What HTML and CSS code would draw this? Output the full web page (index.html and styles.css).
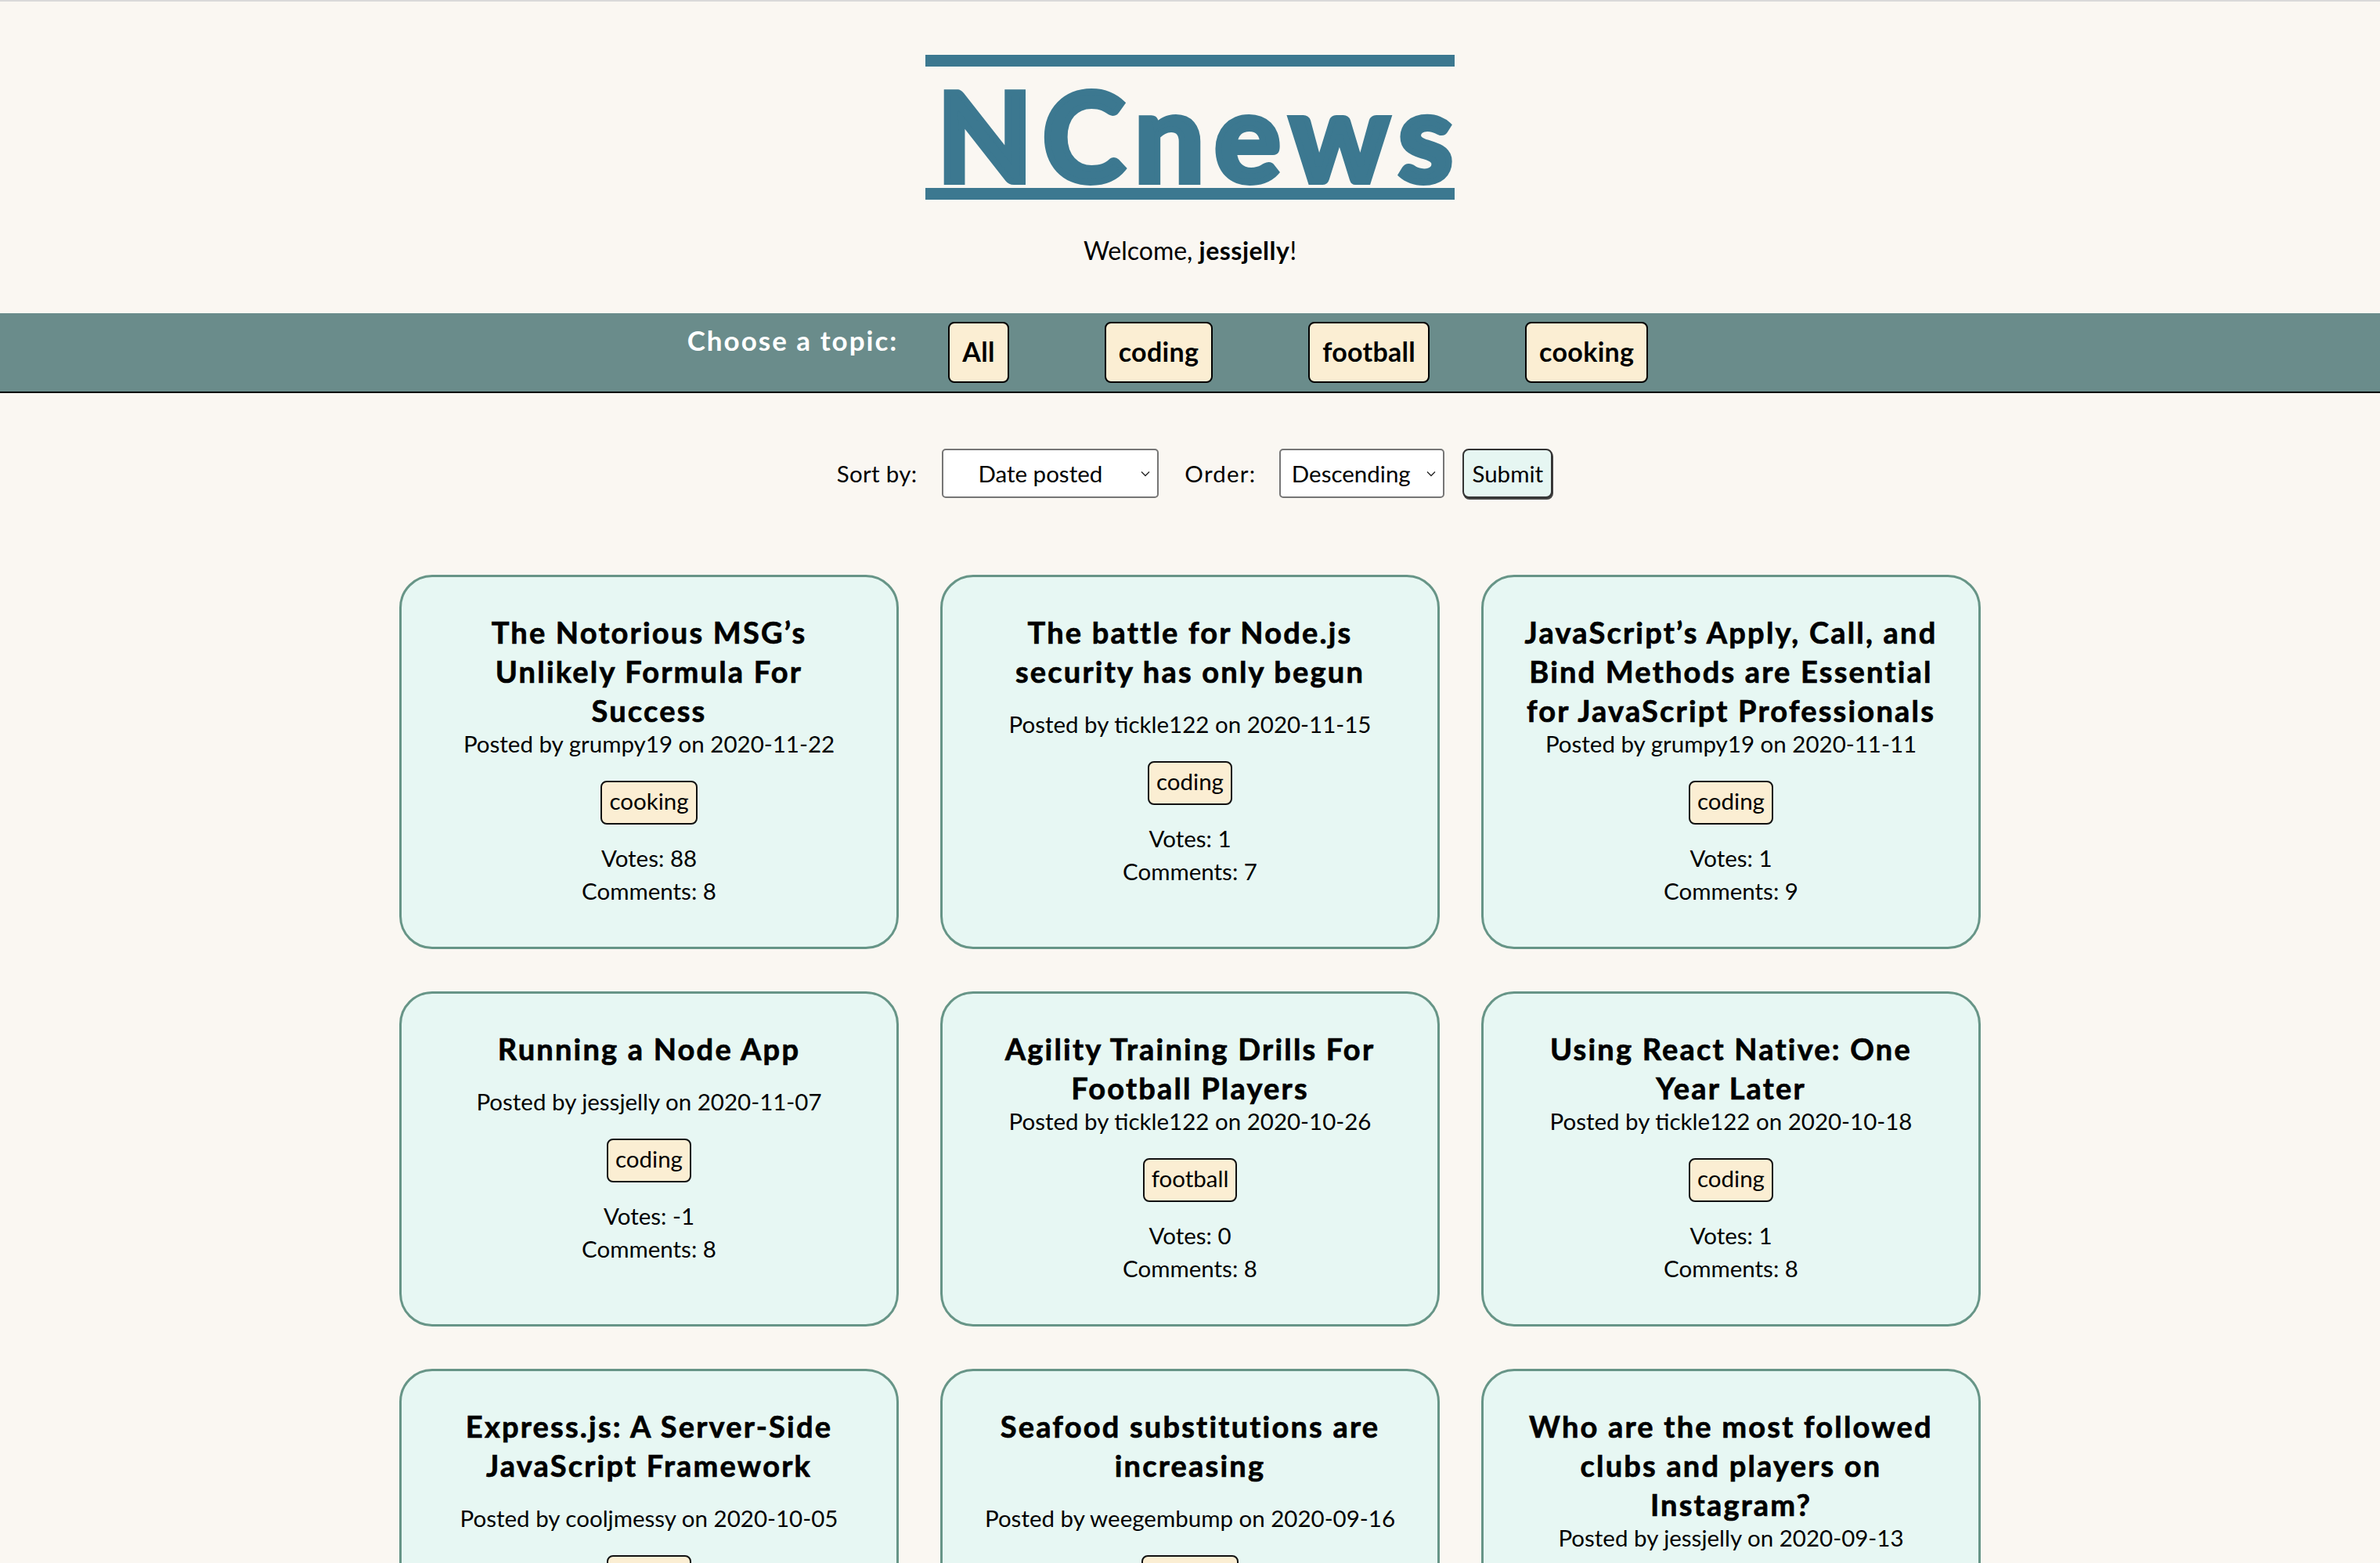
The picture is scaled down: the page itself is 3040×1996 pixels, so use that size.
FILE: index.html
```html
<!DOCTYPE html>
<html lang="en">
<head>
<meta charset="utf-8">
<title>NC News</title>
<link rel="stylesheet" href="styles.css">
</head>
<body>
<header class="masthead">
  <h1 class="logo">NCnews</h1>
  <p class="welcome">Welcome, <strong>jessjelly</strong>!</p>
</header>
<nav class="topics">
  <span class="topics-label">Choose a topic:</span>
  <button class="topic-btn">All</button>
  <button class="topic-btn">coding</button>
  <button class="topic-btn">football</button>
  <button class="topic-btn">cooking</button>
</nav>
<form class="sort">
  <label class="sort-label">Sort by:</label>
  <span class="select-wrap select-sort">
    <select class="select"><option>Date posted</option><option>Votes</option><option>Comment count</option></select>
    <svg class="chev" width="12" height="8" viewBox="0 0 12 8"><path d="M1 1.5 L6 6.5 L11 1.5" fill="none" stroke="#222" stroke-width="1.3"/></svg>
  </span>
  <label class="sort-label order-label">Order:</label>
  <span class="select-wrap select-order">
    <select class="select"><option>Descending</option><option>Ascending</option></select>
    <svg class="chev" width="12" height="8" viewBox="0 0 12 8"><path d="M1 1.5 L6 6.5 L11 1.5" fill="none" stroke="#222" stroke-width="1.3"/></svg>
  </span>
  <button class="submit" type="button">Submit</button>
</form>
<main class="grid">
  <article class="card"><h3 class="card-title">The Notorious MSG’s Unlikely Formula For Success</h3><div class="card-info"><p class="posted">Posted by grumpy19 on 2020-11-22</p><span class="tag">cooking</span><p class="stat votes">Votes: 88</p><p class="stat">Comments: 8</p></div><div class="card-end"></div></article>
  <article class="card"><h3 class="card-title">The battle for Node.js security has only begun</h3><div class="card-info"><p class="posted">Posted by tickle122 on 2020-11-15</p><span class="tag">coding</span><p class="stat votes">Votes: 1</p><p class="stat">Comments: 7</p></div><div class="card-end"></div></article>
  <article class="card"><h3 class="card-title">JavaScript’s Apply, Call, and Bind Methods are Essential for JavaScript Professionals</h3><div class="card-info"><p class="posted">Posted by grumpy19 on 2020-11-11</p><span class="tag">coding</span><p class="stat votes">Votes: 1</p><p class="stat">Comments: 9</p></div><div class="card-end"></div></article>
  <article class="card"><h3 class="card-title">Running a Node App</h3><div class="card-info"><p class="posted">Posted by jessjelly on 2020-11-07</p><span class="tag">coding</span><p class="stat votes">Votes: -1</p><p class="stat">Comments: 8</p></div><div class="card-end"></div></article>
  <article class="card"><h3 class="card-title">Agility Training Drills For Football Players</h3><div class="card-info"><p class="posted">Posted by tickle122 on 2020-10-26</p><span class="tag">football</span><p class="stat votes">Votes: 0</p><p class="stat">Comments: 8</p></div><div class="card-end"></div></article>
  <article class="card"><h3 class="card-title">Using React Native: One Year Later</h3><div class="card-info"><p class="posted">Posted by tickle122 on 2020-10-18</p><span class="tag">coding</span><p class="stat votes">Votes: 1</p><p class="stat">Comments: 8</p></div><div class="card-end"></div></article>
  <article class="card"><h3 class="card-title">Express.js: A Server-Side JavaScript Framework</h3><div class="card-info"><p class="posted">Posted by cooljmessy on 2020-10-05</p><span class="tag">coding</span><p class="stat votes">Votes: 0</p><p class="stat">Comments: 6</p></div><div class="card-end"></div></article>
  <article class="card"><h3 class="card-title">Seafood substitutions are increasing</h3><div class="card-info"><p class="posted">Posted by weegembump on 2020-09-16</p><span class="tag">cooking</span><p class="stat votes">Votes: 0</p><p class="stat">Comments: 6</p></div><div class="card-end"></div></article>
  <article class="card"><h3 class="card-title">Who are the most followed clubs and players on Instagram?</h3><div class="card-info"><p class="posted">Posted by jessjelly on 2020-09-13</p><span class="tag">football</span><p class="stat votes">Votes: 0</p><p class="stat">Comments: 10</p></div><div class="card-end"></div></article>
</main>
</body>
</html>
```
FILE: styles.css
```css
* { box-sizing: border-box; }
body {
  margin: 0;
  border-top: 2px solid #d9d9d9;
  background: #faf7f2;
  font-family: "Lato", "Noto Sans", sans-serif;
  color: #000;
}
.masthead {
  padding-top: 68px;
  text-align: center;
}
.logo {
  width: 676px;
  height: 185px;
  margin: 0 auto;
  padding-left: 15px;
  border-top: 15px solid #3c7890;
  border-bottom: 15px solid #3c7890;
  color: #3c7890;
  font-size: 158px;
  font-weight: 700;
  line-height: 172px;
  letter-spacing: 13px;
  -webkit-text-stroke: 8px #3c7890;
}
.welcome {
  margin: 46px 0 0;
  font-size: 32px;
  line-height: 1.2;
}
.welcome strong {
  font-weight: 700;
  letter-spacing: 0.5px;
}
.topics {
  margin-top: 61px;
  height: 102px;
  background: #6a8c8b;
  border-bottom: 2px solid #000;
  display: flex;
  justify-content: center;
  align-items: flex-start;
  padding: 11px 0 0 4px;
}
.topics-label {
  color: #fff;
  font-size: 35px;
  font-weight: 700;
  letter-spacing: 2px;
  line-height: 1.2;
  padding-top: 2px;
  margin-right: 3px;
}
.topic-btn {
  margin: 0 61px;
  height: 78px;
  padding: 0 16px 4px;
  border: 2px solid #000;
  border-radius: 8px;
  background: #fbeed3;
  font-family: inherit;
  font-size: 34px;
  font-weight: 700;
  letter-spacing: 0.3px;
  color: #000;
}
.sort {
  margin-top: 71px;
  display: flex;
  justify-content: center;
  align-items: center;
  padding-left: 12px;
}
.sort-label {
  font-size: 29.5px;
  letter-spacing: 0.3px;
  margin-right: 32px;
}
.order-label {
  letter-spacing: 1.2px;
  margin-right: 30px;
}
.select-wrap {
  position: relative;
  display: inline-block;
  margin-right: 33px;
}
.select-sort { width: 277px; }
.select-order { width: 211px; margin-right: 23px; }
.select {
  appearance: none;
  -webkit-appearance: none;
  width: 100%;
  height: 63px;
  border: 2px solid #767676;
  border-radius: 5px;
  background: #fff;
  font-family: inherit;
  font-size: 29.5px;
  color: #000;
  text-align-last: center;
  padding: 0 30px 0 4px;
}
.select-order .select { padding: 0 28px 0 0; }
.chev {
  position: absolute;
  right: 11px;
  top: 28px;
  pointer-events: none;
}
.submit {
  height: 63px;
  width: 115px;
  padding: 0;
  border: 2px solid #333;
  border-radius: 8px;
  background: #e6f6f2;
  box-shadow: 1px 2px 0 #444;
  font-family: inherit;
  font-size: 29.5px;
  color: #000;
}
.grid {
  margin: 98px 0 60px;
  display: grid;
  grid-template-columns: repeat(3, 638px);
  gap: 54px 53px;
  justify-content: center;
}
.card {
  display: flex;
  flex-direction: column;
  justify-content: space-between;
  background: #e7f7f3;
  border: 3px solid #679587;
  border-radius: 42px;
  padding: 45px 45px 50px;
  text-align: center;
}
.card-title {
  margin: 0;
  font-size: 38px;
  font-weight: 700;
  letter-spacing: 2.2px;
  line-height: 50px;
  -webkit-text-stroke: 0.7px #000;
}
.posted {
  margin: 0;
  font-size: 29.5px;
  line-height: 36px;
}
.tag {
  display: table;
  margin: 29px auto 0;
  padding: 0 9px 4px;
  border: 2px solid #111;
  border-radius: 8px;
  background: #fbeed3;
  font-size: 29.5px;
  line-height: 48px;
}
.stat {
  margin: 0;
  font-size: 29.5px;
  line-height: 42px;
}
.votes { margin-top: 22px; }
```
